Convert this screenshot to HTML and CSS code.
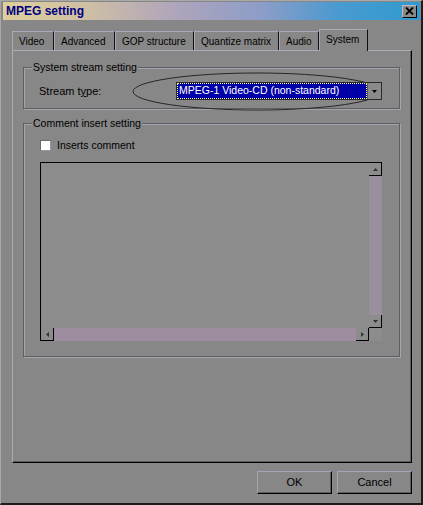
FILE: index.html
```html
<!DOCTYPE html>
<html lang="en">
<head>
  <meta charset="UTF-8">
  <title>MPEG setting</title>
  <link rel="stylesheet" href="styles.css">
</head>
<body>

  <div class="window">
    <!-- Title bar -->
    <div class="titlebar">
      <span class="title">MPEG setting</span>
      <span class="close">
        <svg width="9" height="8" viewBox="0 0 9 8"><path d="M1 0.5 L8 7.5 M8 0.5 L1 7.5" stroke="#000" stroke-width="1.8"/></svg>
      </span>
    </div>

    <!-- Tabs -->
    <div class="tabs">
      <div class="tab tab-video">Video</div>
      <div class="tab tab-advanced">Advanced</div>
      <div class="tab tab-gop">GOP structure</div>
      <div class="tab tab-quant">Quantize matrix</div>
      <div class="tab tab-audio">Audio</div>
      <div class="tab tab-system active">System</div>
    </div>

    <div class="panel">
      <!-- System stream setting -->
      <div class="group group-stream">
        <div class="group-title">System stream setting</div>
        <div class="stream-row">
          <span class="stream-label">Stream t<u>y</u>pe:</span>
          <div class="combo">
            <span class="combo-value">MPEG-1 Video-CD (non-standard)</span>
            <span class="combo-arrow">
              <svg width="5" height="3" viewBox="0 0 5 3"><path d="M0 0 H5 L2.5 3 Z" fill="#000"/></svg>
            </span>
          </div>
        </div>
        <svg class="mark" width="254" height="40" viewBox="0 0 254 40">
          <ellipse cx="125" cy="19.5" rx="124" ry="18.5" fill="none" stroke="#262626" stroke-width="1"/>
        </svg>
      </div>

      <!-- Comment insert setting -->
      <div class="group group-comment">
        <div class="group-title">Comment insert setting</div>
        <div class="check-row">
          <span class="checkbox"></span>
          <span>Inserts comment</span>
        </div>
        <div class="memo">
          <div class="memo-text"></div>
          <div class="vscroll">
            <span class="sbtn">
              <svg width="5" height="3" viewBox="0 0 5 3"><path d="M0 3 H5 L2.5 0 Z" fill="#333"/></svg>
            </span>
            <span class="track"></span>
            <span class="sbtn">
              <svg width="5" height="3" viewBox="0 0 5 3"><path d="M0 0 H5 L2.5 3 Z" fill="#333"/></svg>
            </span>
          </div>
          <div class="hscroll">
            <span class="sbtn">
              <svg width="3" height="5" viewBox="0 0 3 5"><path d="M3 0 V5 L0 2.5 Z" fill="#333"/></svg>
            </span>
            <span class="track"></span>
            <span class="sbtn">
              <svg width="3" height="5" viewBox="0 0 3 5"><path d="M0 0 V5 L3 2.5 Z" fill="#333"/></svg>
            </span>
          </div>
          <div class="corner"></div>
        </div>
      </div>
    </div>

    <!-- Dialog buttons -->
    <div class="buttons">
      <div class="btn">OK</div>
      <div class="btn">Cancel</div>
    </div>
  </div>

</body>
</html>
```

FILE: styles.css
```css
body {
  margin: 0;
  background-color: #878787;
  font-family: 'Liberation Sans', Arial, sans-serif;
  font-size: 10.5px;
  color: #000;
}
.window {
  width: 423px;
  height: 505px;
  box-sizing: border-box;
  border-top: 1px solid #a8a8a8;
  border-left: 1px solid #a8a8a8;
  border-right: 2px solid #1c1c1c;
  border-bottom: 2px solid #1c1c1c;
  padding: 1px 1px 0 2px;
  background-color: #878787;
}

/* Title bar */
.titlebar {
  height: 18px;
  display: flex;
  align-items: center;
  justify-content: space-between;
  padding: 0 3px;
  background: linear-gradient(to right, #dfcf9c 0%, #cfbfa4 20%, #aea4bc 42%, #8d9dc8 62%, #4a9ad0 80%, #2f9bcf 100%);
}
.title {
  font-weight: bold;
  font-size: 12px;
  color: #000080;
}
.close {
  width: 13px;
  height: 11px;
  display: flex;
  align-items: center;
  justify-content: center;
  background-color: #8a8a8a;
  border-top: 1px solid #c0b8c4;
  border-left: 1px solid #c0b8c4;
  border-right: 1px solid #000;
  border-bottom: 1px solid #000;
}

/* Tabs */
.tabs {
  display: flex;
  align-items: flex-end;
  height: 21px;
  margin: 9px 0 0 9px;
}
.tab {
  box-sizing: border-box;
  height: 19px;
  line-height: 20px;
  padding-left: 6px;
  font-size: 10px;
  border-top: 1px solid #b0a8b8;
  border-left: 1px solid #b0a8b8;
  border-right: 1px solid #101010;
  white-space: nowrap;
}
.tab-video { width: 42px; }
.tab-advanced { width: 61px; }
.tab-gop { width: 79px; }
.tab-quant { width: 85px; }
.tab-audio { width: 40px; }
.tab-system { width: 49px; }
.tab.active {
  height: 22px;
  line-height: 19px;
  margin-bottom: -1px;
  background-color: #878787;
  position: relative;
  z-index: 1;
}

/* Tab page */
.panel {
  width: 400px;
  height: 413px;
  margin-left: 9px;
  box-sizing: border-box;
  border-top: 1px solid #b0a8b8;
  border-left: 1px solid #b0a8b8;
  border-right: 1px solid #000;
  border-bottom: 1px solid #000;
  box-shadow: inset -1px -1px 0 #5c5c5c;
  overflow: hidden;
}
.group {
  position: relative;
  width: 377px;
  box-sizing: border-box;
  margin-left: 10px;
  border: 1px solid #5e5e5e;
  box-shadow: inset 1px 1px 0 #aca0b0, 1px 1px 0 #aca0b0;
}
.group-stream {
  margin-top: 16px;
  height: 42px;
}
.group-comment {
  margin-top: 14px;
  height: 234px;
}
.group-title {
  width: fit-content;
  margin: -7px 0 0 8px;
  padding: 0 1px;
  line-height: 13px;
  height: 13px;
  background-color: #878787;
}

.stream-row {
  display: flex;
  align-items: center;
  height: 18px;
  margin-top: 8px;
  padding-left: 15px;
}
.stream-label {
  width: 137px;
  font-size: 11px;
}
.combo {
  display: flex;
  width: 206px;
  height: 18px;
  box-sizing: border-box;
  border: 1px solid #2a2a2a;
  position: relative;
  z-index: 1;
}
.combo-value {
  flex: 1;
  background-color: #0000a8;
  color: #fff;
  line-height: 14px;
  padding-left: 2px;
  outline: 1px dotted #ffff80;
  outline-offset: -1px;
}
.combo-arrow {
  width: 13px;
  display: flex;
  align-items: center;
  justify-content: center;
  background-color: #8a8a8a;
  border-left: 1px solid #5a5a5a;
}
.mark {
  position: absolute;
  left: 108px;
  top: 4px;
  pointer-events: none;
}

/* Comment box */
.check-row {
  display: flex;
  align-items: center;
  height: 11px;
  margin-top: 10px;
  padding-left: 16px;
  line-height: 11px;
}
.checkbox {
  width: 11px;
  height: 11px;
  box-sizing: border-box;
  background-color: #fff;
  border: 1px solid #a090a8;
  border-top-color: #6a6a6a;
  border-left-color: #6a6a6a;
  margin-right: 6px;
}
.memo {
  display: grid;
  grid-template-columns: 1fr 13px;
  grid-template-rows: 1fr 13px;
  width: 342px;
  height: 179px;
  margin: 11px 0 0 16px;
  box-sizing: border-box;
  border-top: 1px solid #000;
  border-left: 1px solid #000;
  background-color: #8c8c8c;
}
.vscroll {
  display: flex;
  flex-direction: column;
}
.hscroll {
  display: flex;
}
.track {
  flex: 1;
  background-color: #9a8f9c;
}
.hscroll .track {
  background-color: #9e8c9f;
}
.sbtn {
  width: 13px;
  height: 13px;
  box-sizing: border-box;
  display: flex;
  align-items: center;
  justify-content: center;
  background-color: #8c8c8c;
  border-right: 1px solid #000;
  border-bottom: 1px solid #000;
}
.corner {
  background-color: #8c8c8c;
}

/* OK / Cancel */
.buttons {
  display: flex;
  justify-content: flex-end;
  gap: 5px;
  margin-top: 8px;
  padding-right: 8px;
}
.btn {
  width: 75px;
  height: 23px;
  box-sizing: border-box;
  line-height: 21px;
  text-align: center;
  font-size: 11px;
  border-top: 1px solid #aca0b4;
  border-left: 1px solid #aca0b4;
  border-right: 1px solid #000;
  border-bottom: 1px solid #000;
  box-shadow: inset -1px -1px 0 #5c5c5c;
}
```
